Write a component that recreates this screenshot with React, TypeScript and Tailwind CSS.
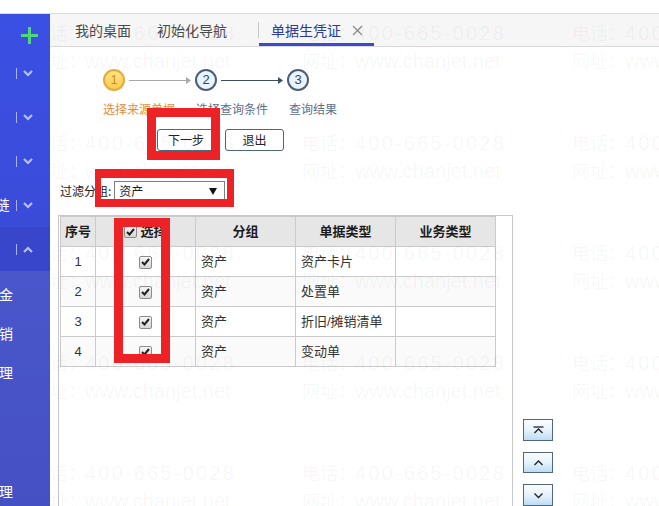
import React from 'react'

const cn = "font-['Liberation_Sans','Noto_Sans_CJK_SC',sans-serif]"

const rows = [
    { id: 1, group: '资产', type: '资产卡片' },
    { id: 2, group: '资产', type: '处置单' },
    { id: 3, group: '资产', type: '折旧/摊销清单' },
    { id: 4, group: '资产', type: '变动单' },
]

function Chevron({ up = false }: { up?: boolean }) {
    return (
        <svg width="10" height="7" viewBox="0 0 10 7" className="shrink-0">
            <polyline
                points={up ? '1,6 5,2 9,6' : '1,1 5,5 9,1'}
                fill="none"
                stroke="#b4c2f8"
                strokeWidth="2.2"
            />
        </svg>
    )
}

function NavRow({ label, up, active }: { label?: string; up?: boolean; active?: boolean }) {
    return (
        <div className={`h-[44px] flex items-center justify-end pr-[17px] ${active ? 'bg-[#3846cb]' : ''}`}>
            {label && <span className="shrink-0 mr-[6px] text-[14px] text-white whitespace-nowrap">{label}</span>}
            <span className="shrink-0 w-[1.5px] h-[11px] bg-[#a6b5f6]" />
            <span className="ml-[6px]">
                <Chevron up={up} />
            </span>
        </div>
    )
}

function SubItem({ label, className = '' }: { label: string; className?: string }) {
    return (
        <div className={`h-[39px] flex items-center justify-end pr-[37px] text-[14px] text-white whitespace-nowrap ${className}`}>
            <span className="shrink-0">{label}</span>
        </div>
    )
}

function Check() {
    return (
        <span className="inline-flex items-center justify-center w-[13px] h-[13px] border border-[#8c8c8c] rounded-[2px] bg-gradient-to-b from-[#f7f7f7] to-[#d6d6d6] align-middle">
            <svg width="9" height="8" viewBox="0 0 9 8">
                <polyline points="1,4 3.5,6.5 8,1" fill="none" stroke="#222" strokeWidth="2" />
            </svg>
        </span>
    )
}

function MoveButton({ kind }: { kind: 'top' | 'up' | 'down' }) {
    return (
        <button className="w-[30px] h-[22px] flex items-center justify-center border border-[#52667c] bg-gradient-to-b from-[#fbfdff] via-[#e6f2fb] to-[#bddcf3]">
            <svg width="11" height="8" viewBox="0 0 11 8">
                {kind === 'top' && <line x1="0.5" y1="1" x2="10.5" y2="1" stroke="#222" strokeWidth="1.3" />}
                <polyline
                    points={kind === 'down' ? '1.5,2.5 5.5,6.5 9.5,2.5' : kind === 'top' ? '1.5,7 5.5,3 9.5,7' : '1.5,6 5.5,2 9.5,6'}
                    fill="none"
                    stroke="#222"
                    strokeWidth="1.3"
                />
            </svg>
        </button>
    )
}

function Watermark() {
    const tiles = Array.from({ length: 15 })
    return (
        <div className="pointer-events-none absolute left-[32px] top-[19px] z-10 grid grid-cols-[repeat(3,270px)] auto-rows-[110px] text-black/[0.045]">
            {tiles.map((_, i) => (
                <div key={i} className="flex flex-col leading-[27px] whitespace-nowrap">
                    <div className="flex items-baseline">
                        <span className="w-[53px] text-[18px] font-['Noto_Sans_CJK_SC',sans-serif]">电话：</span>
                        <span className="text-[20px] tracking-[2.2px] font-['Liberation_Sans',sans-serif]">400-665-0028</span>
                    </div>
                    <div className="flex items-baseline">
                        <span className="w-[53px] text-[18px] font-['Noto_Sans_CJK_SC',sans-serif]">网址：</span>
                        <span className="text-[20px] font-['Liberation_Sans',sans-serif]">www.chanjet.net</span>
                    </div>
                </div>
            ))}
        </div>
    )
}

export default function App() {
    return (
        <div className={`relative w-[659px] h-[506px] overflow-hidden bg-white flex flex-col ${cn}`}>
            {/* top strip */}
            <div className="h-[14px] shrink-0 bg-white border-b border-[#dcdcdc]" />

            <div className="flex flex-1 min-h-0">
                {/* Sidebar */}
                <aside className="relative z-20 w-[50px] shrink-0 flex flex-col overflow-hidden bg-gradient-to-b from-[#4e5fd5] to-[#4550c3]">
                    <div className="bg-gradient-to-b from-[#3a50e4] to-[#3a4ad6]">
                        <div className="h-[37px] pt-[5px] flex items-center justify-end pr-[12px]">
                            <svg width="17" height="17" viewBox="0 0 17 17">
                                <rect x="7" y="0" width="3" height="17" fill="#4fd87a" />
                                <rect x="0" y="7" width="17" height="3" fill="#4fd87a" />
                            </svg>
                        </div>
                        <NavRow />
                        <NavRow />
                        <NavRow />
                        <NavRow label="供应链" />
                        <NavRow up active />
                    </div>
                    <div className="pt-[5px]">
                        <SubItem label="现金" />
                        <SubItem label="促销" />
                        <SubItem label="卡片管理" />
                        <SubItem label="期末处理" className="mt-[80px]" />
                    </div>
                </aside>

                {/* Main */}
                <main className="flex-1 min-w-0 flex flex-col">
                    {/* Tab bar */}
                    <div className="h-[33px] shrink-0 bg-[#f6f6f6] border-b border-[#d9d9d9] flex items-stretch text-[14px] text-[#4a4a4a] font-['Noto_Sans_CJK_SC',sans-serif]">
                        <div className="ml-[25px] flex items-center">我的桌面</div>
                        <div className="ml-[26px] flex items-center">初始化导航</div>
                        <div className="ml-[31px] my-[8px] w-px bg-[#c8c8c8]" />
                        <div className="relative flex items-center pl-[12px] pr-[11px] text-[#2c3b9c]">
                            单据生凭证
                            <svg width="11" height="11" viewBox="0 0 11 11" className="ml-[11px]">
                                <line x1="1" y1="1" x2="10" y2="10" stroke="#8a8a8a" strokeWidth="1.3" />
                                <line x1="10" y1="1" x2="1" y2="10" stroke="#8a8a8a" strokeWidth="1.3" />
                            </svg>
                            <span className="absolute left-0 right-0 bottom-0 h-[3px] bg-[#3c4cc8]" />
                        </div>
                    </div>

                    {/* Steps */}
                    <div className="mt-[22px] ml-[53px] flex items-center">
                        <div className="w-[22px] h-[22px] rounded-full border-2 border-[#e9a93a] bg-gradient-to-b from-[#fee583] to-[#fbcb4d] flex items-center justify-center text-[12px] text-[#c9861c]">1</div>
                        <div className="w-[70px] flex items-center px-[4px]">
                            <span className="flex-1 h-px bg-[#a8a8a8]" />
                            <svg width="5" height="7" viewBox="0 0 5 7"><polygon points="0,0 5,3.5 0,7" fill="#a8a8a8" /></svg>
                        </div>
                        <div className="w-[22px] h-[22px] rounded-full border-2 border-[#4e5e79] bg-[#eaf4fd] flex items-center justify-center text-[13px] text-[#34445e]">2</div>
                        <div className="w-[70px] flex items-center px-[4px]">
                            <span className="flex-1 h-px bg-[#3f4d64]" />
                            <svg width="5" height="7" viewBox="0 0 5 7"><polygon points="0,0 5,3.5 0,7" fill="#3f4d64" /></svg>
                        </div>
                        <div className="w-[22px] h-[22px] rounded-full border-2 border-[#4e5e79] bg-[#eaf4fd] flex items-center justify-center text-[13px] text-[#34445e]">3</div>
                    </div>
                    <div className="mt-[10px] ml-[53px] flex gap-[21px] text-[12px] leading-[16px] font-['Noto_Sans_CJK_SC',sans-serif]">
                        <span className="text-[#e58b3a]">选择来源单据</span>
                        <span className="text-[#5d6f8d]">选择查询条件</span>
                        <span className="text-[#5d6f8d]">查询结果</span>
                    </div>

                    {/* Buttons */}
                    <div className="mt-[12px] ml-[107px] flex gap-[10px] text-[12px] text-[#222] font-['Noto_Sans_CJK_SC',sans-serif]">
                        <button className="w-[58px] h-[22px] border border-[#4a6979] rounded-[3px] bg-white">下一步</button>
                        <button className="w-[59px] h-[22px] border border-[#4a6979] rounded-[3px] bg-white">退出</button>
                    </div>

                    {/* Filter */}
                    <div className="mt-[30px] ml-[10px] flex items-center text-[12px] text-[#222]">
                        <span className="font-['Noto_Sans_CJK_SC',sans-serif]">过滤分组:</span>
                        <div className="ml-[3px] w-[111px] h-[20px] border border-[#7d7d7d] bg-white flex items-center justify-between pl-[4px] pr-[7px]">
                            <span className="font-['Noto_Sans_CJK_SC',sans-serif]">资产</span>
                            <svg width="8" height="7" viewBox="0 0 8 7"><polygon points="0,0 8,0 4,7" fill="#111" /></svg>
                        </div>
                    </div>

                    {/* Table area */}
                    <div className="mt-[14px] ml-[8px] flex-1 flex gap-[10px] min-h-0">
                        <div className="w-[455px] h-[320px] shrink-0 border border-[#c8c8c8] pl-[1px]">
                            <table className="border-collapse text-[13px] text-[#333] table-fixed">
                                <colgroup>
                                    <col className="w-[35px]" />
                                    <col className="w-[100px]" />
                                    <col className="w-[100px]" />
                                    <col className="w-[100px]" />
                                    <col className="w-[100px]" />
                                </colgroup>
                                <thead>
                                    <tr className="h-[30px] bg-[#e6e6e6] text-[13px] font-bold text-[#1c1c1c]">
                                        <th className="border border-[#cacaca] font-bold">序号</th>
                                        <th className="border border-[#cacaca] font-bold">
                                            <span className="inline-flex items-center gap-[3px]">
                                                <Check />
                                                选择
                                            </span>
                                        </th>
                                        <th className="border border-[#cacaca] font-bold">分组</th>
                                        <th className="border border-[#cacaca] font-bold">单据类型</th>
                                        <th className="border border-[#cacaca] font-bold">业务类型</th>
                                    </tr>
                                </thead>
                                <tbody>
                                    {rows.map((r, i) => (
                                        <tr key={r.id} className={`h-[30px] ${i % 2 === 1 ? 'bg-[#fafafa]' : 'bg-white'}`}>
                                            <td className="border border-[#cacaca] text-center">{r.id}</td>
                                            <td className="border border-[#cacaca] text-center">
                                                <Check />
                                            </td>
                                            <td className="border border-[#cacaca] pl-[5px]">{r.group}</td>
                                            <td className="border border-[#cacaca] pl-[5px] whitespace-nowrap">{r.type}</td>
                                            <td className="border border-[#cacaca]" />
                                        </tr>
                                    ))}
                                </tbody>
                            </table>
                        </div>
                        <div className="pt-[204px] flex flex-col gap-[11px]">
                            <MoveButton kind="top" />
                            <MoveButton kind="up" />
                            <MoveButton kind="down" />
                        </div>
                    </div>
                </main>
            </div>

            <Watermark />

            {/* red annotation boxes */}
            <div className="pointer-events-none absolute z-30 left-[147px] top-[108px] w-[73px] h-[52px] border-[9px] border-[#ec2227]" />
            <div className="pointer-events-none absolute z-30 left-[95px] top-[169px] w-[139px] h-[38px] border-t-[9px] border-b-[8px] border-l-[6px] border-r-[7px] border-[#ec2227]" />
            <div className="pointer-events-none absolute z-30 left-[114px] top-[218px] w-[56px] h-[145px] border-[9px] border-[#ec2227]" />
        </div>
    )
}
